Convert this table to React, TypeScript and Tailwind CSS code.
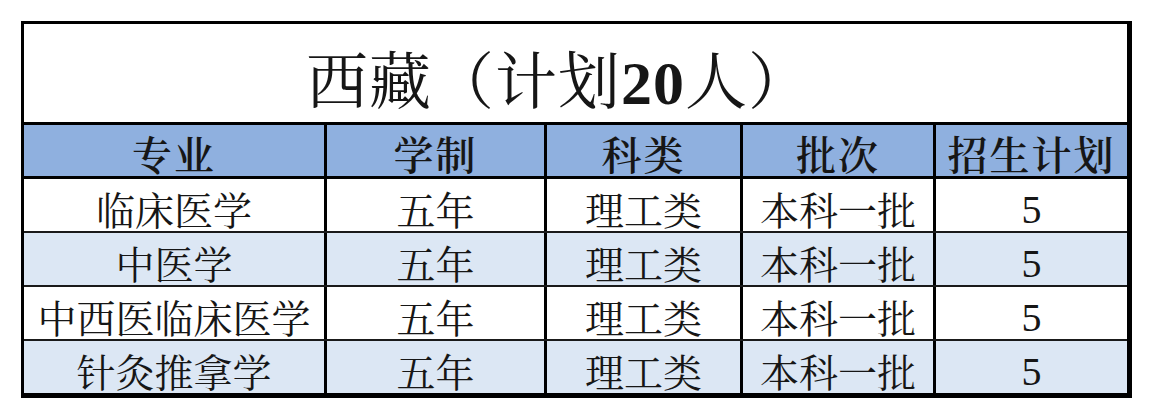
const rows = [
  { major: "临床医学", years: "五年", kind: "理工类", batch: "本科一批", plan: "5" },
  { major: "中医学", years: "五年", kind: "理工类", batch: "本科一批", plan: "5" },
  { major: "中西医临床医学", years: "五年", kind: "理工类", batch: "本科一批", plan: "5" },
  { major: "针灸推拿学", years: "五年", kind: "理工类", batch: "本科一批", plan: "5" },
];

const headers = ["专业", "学制", "科类", "批次", "招生计划"];

const font = {
  fontFamily: '"Liberation Serif", "Noto Serif CJK SC", "Noto Sans CJK SC", serif',
};

const cols = "grid grid-cols-[303px_220px_196px_193px_1fr]";

export default function App() {
  return (
    <div className="w-[1154px] h-[420px] bg-white pt-[21px] pl-[21px] text-[#161616]" style={font}>
      <div className="w-[1111px] border-black border-l-[3px] border-t-[3px] border-r-[5px] border-b-[5px]">
        {/* 标题 */}
        <div className="h-[101px] border-b-[3px] border-black flex items-center justify-center pt-[20px] pr-[34px] text-[62px] leading-none tracking-[1px]">
          <span>西藏（计划</span>
          <span className="font-bold">20</span>
          <span>人）</span>
        </div>

        {/* 表头 */}
        <div className={`${cols} h-[54px] border-b-[3px] border-black bg-[#8fb0df]`}>
          {headers.map((h, i) => (
            <div
              key={h}
              className={`flex items-center justify-center pt-[12px] text-[40px] font-semibold leading-none tracking-[2px] ${
                i < 4 ? "border-r-[3px] border-black" : ""
              }`}
            >
              {h}
            </div>
          ))}
        </div>

        {rows.map((r, idx) => (
          <div
            key={r.major}
            className={`${cols} ${idx < 3 ? "h-[54px] border-b-2 border-[#1a1a1a]" : "h-[52px]"} ${
              idx % 2 === 1 ? "bg-[#dce7f4]" : "bg-white"
            }`}
          >
            {[r.major, r.years, r.kind, r.batch].map((v, i) => (
              <div
                key={i}
                className="flex items-center justify-center pt-[13px] text-[39px] leading-none border-r-[3px] border-black"
              >
                {v}
              </div>
            ))}
            <div className="flex items-center justify-center pt-[10px] text-[40px] leading-none font-['Liberation_Serif','Tinos','DejaVu_Serif',serif]">
              {r.plan}
            </div>
          </div>
        ))}
      </div>
    </div>
  );
}
